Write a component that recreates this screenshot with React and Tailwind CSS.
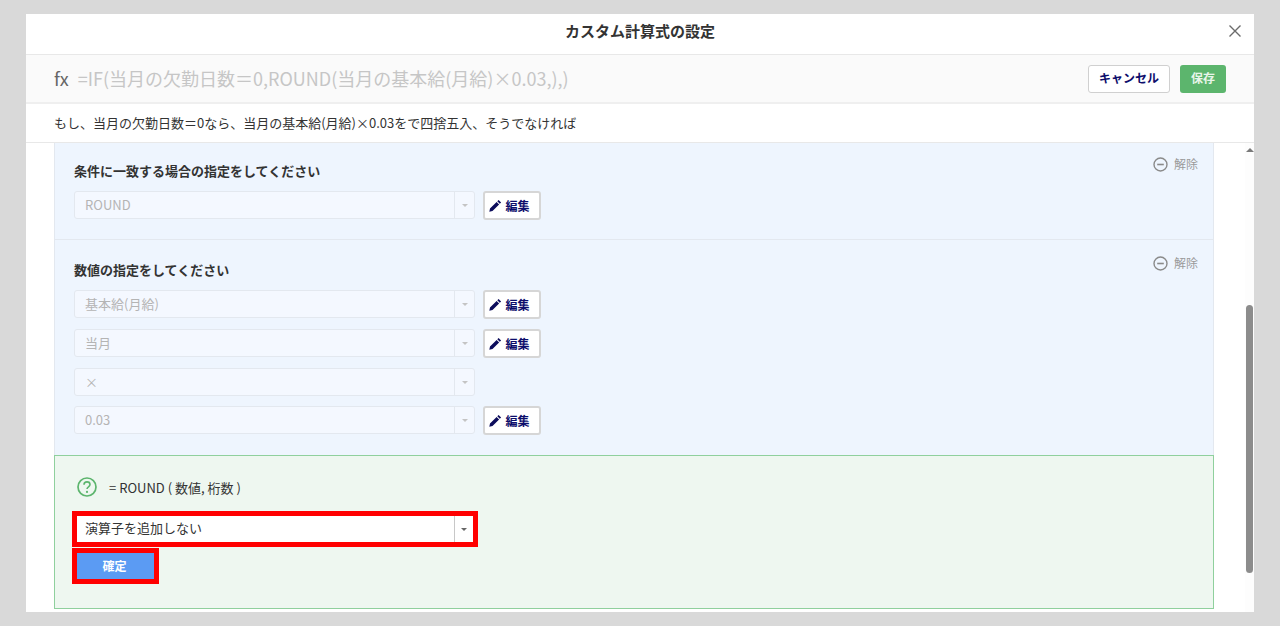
import React from "react";

const font = { fontFamily: '"Noto Sans CJK JP", "Noto Sans", sans-serif' };

const PencilIcon = () => (
  <svg width="13" height="13" viewBox="0 0 13 13" className="shrink-0">
    <path d="M9.6.9l2.5 2.5-1.3 1.3-2.5-2.5zM7.6 2.9l2.5 2.5-6.6 6.6-3.2.7.7-3.2z" fill="#0d0d5c" />
  </svg>
);

const MinusCircle = () => (
  <svg width="15" height="15" viewBox="0 0 15 15" className="shrink-0">
    <circle cx="7.5" cy="7.5" r="6.5" fill="none" stroke="#8a8a8a" strokeWidth="1.4" />
    <path d="M4.2 7.5h6.6" stroke="#8a8a8a" strokeWidth="1.6" />
  </svg>
);

const HelpIcon = () => (
  <svg width="20" height="20" viewBox="0 0 20 20" className="shrink-0">
    <circle cx="10" cy="10" r="9" fill="none" stroke="#5cb56d" strokeWidth="1.7" />
    <path d="M7 7.8c0-1.8 1.3-2.9 3-2.9s3 1.1 3 2.6c0 2.3-3 2.3-3 4.6" fill="none" stroke="#5cb56d" strokeWidth="1.6" />
    <circle cx="10" cy="14.9" r="1.1" fill="#5cb56d" />
  </svg>
);

const EditButton = () => (
  <button className="flex h-[29px] w-[58px] items-center justify-center gap-[3px] rounded-[3px] border-2 border-[#d6d6d6] bg-white pr-[5px] text-[12px] font-bold text-[#0d0d6b]">
    <PencilIcon />
    編集
  </button>
);

const DisabledSelect = ({ value }) => (
  <div className="flex h-[28px] w-[401px] items-center rounded-[3px] border border-[#e3e8ef] bg-[#f4f8ff] text-[13px] text-[#b4b4b4]">
    <span className="flex-1 pl-[10px]">{value}</span>
    <span className="flex h-full w-[20px] items-center justify-center border-l border-[#e3e8ef]">
      <span className="h-0 w-0 border-x-[3px] border-t-[3px] border-x-transparent border-t-[#c4c4c4]" />
    </span>
  </div>
);

const RemoveLink = ({ className }) => (
  <div className={`absolute right-[15px] flex items-center gap-[6px] text-[12px] text-[#9a9a9a] ${className}`}>
    <MinusCircle />
    解除
  </div>
);

const SelectRow = ({ value, edit = true }) => (
  <div className="mt-[10px] flex items-start gap-[8px]">
    <DisabledSelect value={value} />
    {edit && <EditButton />}
  </div>
);

export default function App() {
  return (
    <div className="h-[626px] w-[1280px] overflow-hidden bg-[#d9d9d9] pl-[26px] pt-[14px] text-[#333]" style={font}>
      <div className="relative flex h-[598px] w-[1228px] flex-col bg-white">
        <div className="flex h-[41px] items-center justify-center border-b border-[#e8e8e8] pb-[5px] text-[15px] font-bold text-[#333]">
          カスタム計算式の設定
          <svg width="14" height="14" viewBox="0 0 14 14" className="absolute right-[12px] top-[10px]">
            <path d="M1.5 1.5l11 11M12.5 1.5l-11 11" stroke="#6b6b6b" strokeWidth="1.4" />
          </svg>
        </div>

        <div className="flex h-[49px] items-center border-b-2 border-[#efefef] bg-[#fafafa] pl-[28px] pr-[28px]">
          <span className="text-[18px] text-[#666]">fx</span>
          <span className="ml-[9px] flex-1 text-[18px] text-[#c6c6c6]">=IF(当月の欠勤日数＝0,ROUND(当月の基本給(月給)×0.03,),)</span>
          <button className="h-[28px] w-[82px] rounded-[3px] border border-[#d0d0d0] bg-white pb-[2px] text-[12px] font-bold text-[#0d0d6b]">キャンセル</button>
          <button className="ml-[10px] h-[28px] w-[46px] rounded-[3px] bg-[#5cb56d] pb-[2px] text-[12px] font-bold text-[#e8f5ea]">保存</button>
        </div>

        <div className="flex h-[39px] items-center border-b border-[#e8e8e8] pl-[28px] text-[13px] text-[#333]">
          もし、当月の欠勤日数＝0なら、当月の基本給(月給)×0.03をで四捨五入、そうでなければ
        </div>

        <div className="flex min-h-0 flex-1">
          <div className="ml-[28px] w-[1160px]">
            <div className="relative h-[97px] border-x border-b border-[#e3e8ef] bg-[#eef5fe] pl-[19px] pt-[18px]">
              <RemoveLink className="top-[12px]" />
              <div className="h-[20px] text-[13px] font-bold leading-[20px]">条件に一致する場合の指定をしてください</div>
              <SelectRow value="ROUND" />
            </div>

            <div className="relative h-[215px] border-x border-[#e3e8ef] bg-[#eef5fe] pl-[19px] pt-[20px]">
              <RemoveLink className="top-[14px]" />
              <div className="h-[20px] text-[13px] font-bold leading-[20px]">数値の指定をしてください</div>
              <SelectRow value="基本給(月給)" />
              <SelectRow value="当月" />
              <SelectRow value="×" edit={false} />
              <SelectRow value="0.03" />
            </div>

            <div className="h-[154px] border border-[#8fd09d] bg-[#eef7f0] pl-[17px] pt-[21px]">
              <div className="flex h-[20px] items-center text-[13px] text-[#333]">
                <span className="ml-[5px]"><HelpIcon /></span>
                <span className="ml-[12px] pt-[2px]">= ROUND ( 数値, 桁数 )</span>
              </div>
              <div className="mt-[14px] flex h-[36px] w-[406px] items-center border-[5px] border-[#ff0000] bg-white text-[13px] text-[#333]">
                <span className="flex-1 pb-[2px] pl-[8px]">演算子を追加しない</span>
                <span className="flex h-full w-[19px] items-center justify-center border-l border-[#c8c8c8]">
                  <span className="h-0 w-0 border-x-[3px] border-t-[3px] border-x-transparent border-t-[#666]" />
                </span>
              </div>
              <button className="mt-[1px] block h-[36px] w-[87px] border-[5px] border-[#ff0000] bg-[#5b9bf3] pr-[2px] text-[12px] font-bold text-white">確定</button>
            </div>
          </div>

          <div className="ml-auto flex w-[9px] flex-col items-center bg-[#fdfdfd] pt-[5px]">
            <span className="h-0 w-0 border-x-[4px] border-b-[4px] border-x-transparent border-b-[#7a7a7a]" />
            <div className="mt-[153px] h-[268px] w-[7px] rounded-full bg-[#8c8c8c]" />
          </div>
        </div>
      </div>
    </div>
  );
}
